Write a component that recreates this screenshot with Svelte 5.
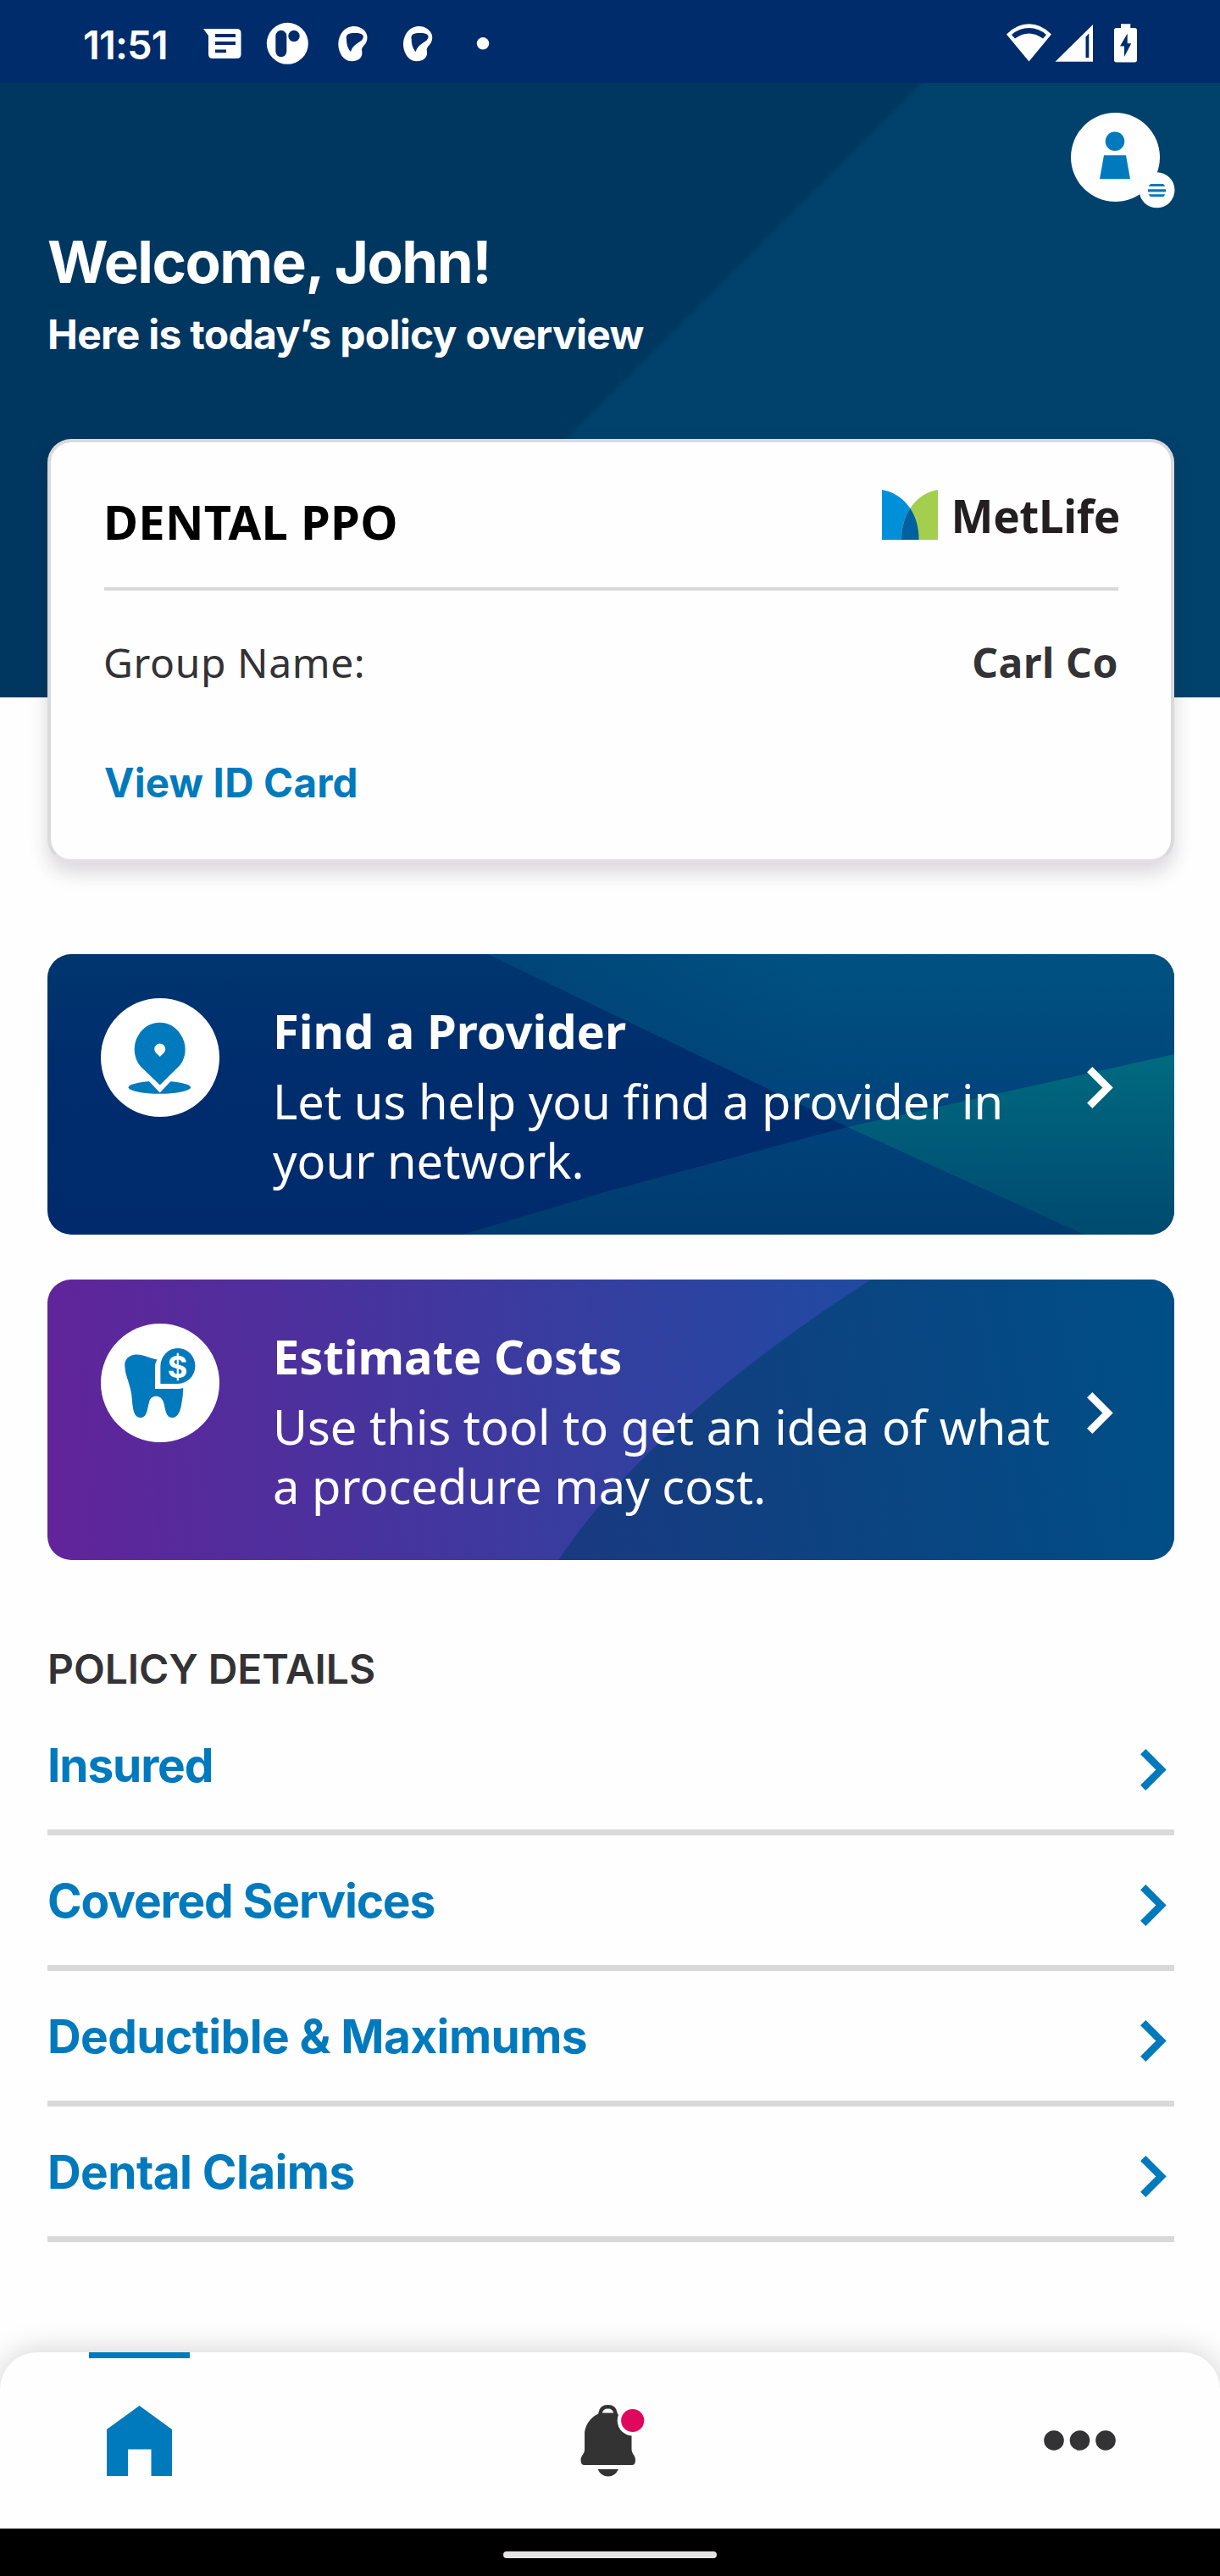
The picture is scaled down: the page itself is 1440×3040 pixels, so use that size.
<script>
  const policyLinks = [
    { label: 'Insured', fit: 'snug' },
    { label: 'Covered Services', fit: 'snug' },
    { label: 'Deductible & Maximums', fit: '' },
    { label: 'Dental Claims', fit: '' }
  ];
</script>

{#snippet chevron()}
  <svg class="chevron" viewBox="0 0 31 49" aria-hidden="true">
    <path d="M3.2 3.2 24.5 24.5 3.2 45.8" fill="none" stroke="currentColor" stroke-width="8.8" />
  </svg>
{/snippet}

<div class="screen">
  <div class="status">
    <span class="time">11:51</span>
    <svg class="notifications" viewBox="238 20 342 60" aria-hidden="true">
      <path d="M240 34h39.500q5 0 5 5v25q0 5-5 5h-28.500q-5 0-5-5V42z" fill="#fff" />
      <path d="M254 42h24M254 51h24M254 60.300h13" stroke="#002c6b" stroke-width="3.800" />
      <circle cx="339.300" cy="51.300" r="24.500" fill="#fff" />
      <rect x="325.300" y="35.800" width="13" height="31.400" rx="6.500" fill="#002c6b" />
      <circle cx="347" cy="42.500" r="6.700" fill="#002c6b" />
      {#each [0, 76.7] as dx}
        <g transform="translate({dx} 0)">
          <path d="M416 31C426 30 434 37 433.500 45C433 53 427 54 427 59C429 67 424 72.300 415 72.300C404 72 399 60 399.300 51C400 40 407 32 416 31Z" fill="#fff" />
          <path d="M409 46C407.500 40 413 39 418 39C426 38.500 431 41 428 46C425 51 417 51 414 61C410 57 409 51 409 46Z" fill="#002c6b" />
        </g>
      {/each}
      <circle cx="570" cy="51.300" r="7.200" fill="#fff" />
    </svg>
    <svg class="system" viewBox="1186 20 158 60" aria-hidden="true">
      <path d="M1214.500 72.500 1188 40.500Q1200 28.300 1214.500 28.300T1241 40.500Z" fill="#fff" />
      <path d="M1194 41Q1203 33 1214.500 33T1235 41L1231 45.500Q1223 39.500 1214.500 39.500T1198 45.500Z" fill="#002c6b" />
      <path d="M1245.500 72.700H1290V29Z" fill="#fff" />
      <path d="M1281.500 68.300V43.500L1285.300 39.500V68.300Z" fill="#002c6b" />
      <path d="M1323 28.300h11.300v4.700h5q2.700 0 2.700 2.700v35q0 2.700-2.700 2.700h-21.600q-2.700 0-2.700-2.700v-35q0-2.700 2.700-2.700h5.300z" fill="#fff" />
      <path d="M1330.700 39.500 1322 54.500H1327V67L1335.300 51.300H1330.700Z" fill="#002c6b" />
    </svg>
  </div>

  <header class="top">
    <button class="avatar" aria-label="Profile menu">
      <svg viewBox="0 0 123 113" aria-hidden="true">
        <circle cx="52.500" cy="52.500" r="52.500" fill="#fff" />
        <circle cx="52" cy="33.700" r="11.300" fill="#007abc" />
        <path d="M39 50.300H65L70 78.300H34Z" fill="#007abc" />
        <circle cx="101.500" cy="91.300" r="21" fill="#fff" />
        <path d="M94 84h15l2.500 3h-20zM91 90.300h21v3.200H91zM91.500 96.300h20l-2.500 3h-15z" fill="#007abc" />
      </svg>
    </button>
    <h1>Welcome, John!</h1>
    <p class="subtitle">Here is today’s policy overview</p>

    <section class="card">
      <div class="card-head">
        <h2>DENTAL PPO</h2>
        <div class="logo">
          <svg viewBox="0 0 66 59" aria-hidden="true">
            <clipPath id="leaf"><path d="M0 0C24 4 44 26 43.500 59H0Z" /></clipPath>
            <path d="M0 0C24 4 44 26 43.500 59H0Z" fill="#0090da" />
            <path d="M66 0C42 4 23 26 23 59H66Z" fill="#a4ce4e" />
            <path d="M66 0C42 4 23 26 23 59H66Z" fill="#0061a0" clip-path="url(#leaf)" />
          </svg>
          <span>MetLife</span>
        </div>
      </div>
      <div class="card-row">
        <span>Group Name:</span>
        <strong>Carl Co</strong>
      </div>
      <span class="card-link">View ID Card</span>
    </section>
  </header>

  <main>
    <section class="banner">
      <svg class="art" viewBox="0 0 1330 331" preserveAspectRatio="none" aria-hidden="true">
        <defs>
          <linearGradient id="base" x1="0" y1="0" x2="0" y2="1"><stop offset="0" stop-color="#00366f" /><stop offset=".4" stop-color="#002d6d" /><stop offset="1" stop-color="#002a6c" /></linearGradient>
          <linearGradient id="sky" x1="0" y1="0" x2="0" y2="1"><stop offset="0" stop-color="#005281" /><stop offset="1" stop-color="#00427a" /></linearGradient>
          <linearGradient id="fade" gradientUnits="userSpaceOnUse" x1="500" y1="0" x2="900" y2="0"><stop offset="0" stop-color="#003a70" stop-opacity=".6" /><stop offset="1" stop-color="#003a70" stop-opacity="0" /></linearGradient>
          <linearGradient id="floor" x1="0" y1="0" x2="0" y2="1"><stop offset="0" stop-color="#00427a" /><stop offset="1" stop-color="#003b6e" /></linearGradient>
          <linearGradient id="teal" x1="0" y1="0" x2="0" y2="1"><stop offset="0" stop-color="#006a80" /><stop offset="1" stop-color="#004a70" /></linearGradient>
        </defs>
        <path d="M0 0H1330V331H0Z" fill="url(#base)" />
        <path d="M520 0H1330V118L944 204Z" fill="url(#sky)" />
        <path d="M520 0H1330V118L944 204Z" fill="url(#fade)" />
        <path d="M490 331 664 279 944 204 1230 331Z" fill="url(#floor)" />
        <path d="M944 204 1330 118V331H1224Z" fill="url(#teal)" />
      </svg>
      <svg class="badge" viewBox="0 0 140 140" aria-hidden="true">
        <circle cx="70" cy="70" r="70" fill="#fff" />
        <ellipse cx="69.300" cy="105.200" rx="36.700" ry="7.500" fill="#007abc" />
        <path d="M55 96 69.700 111.500 84.500 96Z" fill="#fff" />
        <path d="M69.700 102.500 47.500 81C38 71 37.500 54 44.500 43.500C50 34 59 28.800 69.700 28.800S89 34 94.500 43.500C102 54 101.500 71 91.500 81Z" fill="#007abc" />
        <path d="M69.700 69 65 64.500A6.500 6.500 0 1 1 74.500 64.500Z" fill="#fff" />
      </svg>
      <div class="copy">
        <h3>Find a Provider</h3>
        <p>Let us help you find a provider in your network.</p>
      </div>
      {@render chevron()}
    </section>

    <section class="banner">
      <svg class="art" viewBox="0 0 1330 331" preserveAspectRatio="none" aria-hidden="true">
        <defs>
          <linearGradient id="violet" gradientUnits="userSpaceOnUse" x1="0" y1="60" x2="976" y2="0"><stop offset="0" stop-color="#61249b" /><stop offset=".6" stop-color="#393c9f" /><stop offset="1" stop-color="#1f4ba2" /></linearGradient>
          <linearGradient id="deep" gradientUnits="userSpaceOnUse" x1="600" y1="331" x2="1330" y2="200"><stop offset="0" stop-color="#1a3980" /><stop offset=".5" stop-color="#0b4481" /><stop offset="1" stop-color="#004e86" /></linearGradient>
        </defs>
        <path d="M0 0H1330V331H0Z" fill="url(#violet)" />
        <path d="M972 0Q715 165 603 331H1330V0Z" fill="url(#deep)" />
      </svg>
      <svg class="badge" viewBox="0 0 140 140" aria-hidden="true">
        <circle cx="70" cy="70" r="70" fill="#fff" />
        <path d="M28.300 50C27.500 42 34 36.500 42 36.500C51 36.500 58 41 66.500 42.500Q64 46 64 52V77H92.700L97.300 76Q97 86 95.300 94.500C94 103 91 111 84.500 111C76 111 76.500 100 74 93C72 83.500 58.500 83 57 93C54.500 101 55 111 46.500 111C39 111 38 101 37 92C36.500 81 34 73 31 64Q28.500 57 28.300 50Z" fill="#007abc" />
        <path d="M70.400 71V50A20.500 21 0 1 1 91 71Z" fill="#007abc" />
        <text x="90.500" y="63.600" class="dollar">$</text>
      </svg>
      <div class="copy">
        <h3>Estimate Costs</h3>
        <p>Use this tool to get an idea of what a procedure may cost.</p>
      </div>
      {@render chevron()}
    </section>

    <h4>POLICY DETAILS</h4>
    <ul>
      {#each policyLinks as link}
        <li>
          <span class={link.fit}>{link.label}</span>
          {@render chevron()}
        </li>
      {/each}
    </ul>
  </main>

  <nav>
    <span class="tab active">
      <svg class="home" viewBox="0 0 77 83" aria-hidden="true"><path d="M38.500 0 77 28V83H52.500V51.500H25V83H0V28Z" fill="#007abc" /></svg>
    </span>
    <svg class="bell" viewBox="685 2836 77 88" aria-hidden="true">
      <path d="M708.500 2851V2848Q709.500 2840.200 717.500 2840.200T726.500 2848V2851" fill="none" stroke="#333" stroke-width="4.500" />
      <path d="M710 2847.500H725C736 2851 745 2861 745.500 2873V2891C746 2896 750 2898 750 2903Q750 2909 746 2909H689.500Q685.500 2909 685.500 2903C685.500 2898 690 2896 690 2891V2873C690 2861 699 2850 710 2847.500Z" fill="#333" />
      <path d="M705.500 2914H730Q726 2922.500 717.800 2922.500T705.500 2914Z" fill="#333" />
      <circle cx="746.700" cy="2856.500" r="18" fill="#fff" />
      <circle cx="746.700" cy="2856.500" r="13.600" fill="#e0085c" />
    </svg>
    <svg class="more" viewBox="0 0 86 24" aria-hidden="true">
      <circle cx="12" cy="12" r="11.800" fill="#333235" /><circle cx="42.500" cy="12" r="11.800" fill="#333235" /><circle cx="73" cy="12" r="11.800" fill="#333235" />
    </svg>
  </nav>
  <div class="gesture"><span></span></div>
</div>

<style>
  :global(body) { margin: 0; background: #fefefe; }
  .screen {
    display: flex; flex-direction: column; box-sizing: border-box;
    width: 1440px; height: 3040px; overflow: hidden;
    background: #fefefe; color: #333235; font-family: "Noto Sans", sans-serif;
  }
  svg { display: block; flex: none; }
  h1, h2, h3, h4, p, ul { margin: 0; padding: 0; }

  .status { flex: none; display: flex; align-items: flex-start; height: 98px; padding-left: 98px; box-sizing: border-box; background: #002c6b; color: #fff; }
  .time { width: 140px; padding-top: 23px; font: 600 47px/60px Inter, sans-serif; letter-spacing: -.900px; }
  .notifications { width: 342px; height: 60px; margin-top: 20px; }
  .system { width: 158px; height: 60px; margin: 20px 96px 0 auto; }

  .top {
    flex: none; display: flex; flex-direction: column; height: 920px; padding: 0 54px 0 56px; box-sizing: border-box;
    background: linear-gradient(135deg, #003761 50%, #00426c 50.500%) no-repeat 0 0 / 100% 725px;
    color: #fff; font-family: Inter, sans-serif;
  }
  .avatar { align-self: flex-end; width: 123px; height: 113px; margin: 35px -1px 0 0; padding: 0; border: 0; background: none; }
  h1 { margin-top: 23px; font-size: 69px; line-height: 80px; font-weight: 700; letter-spacing: -1.500px; }
  .subtitle { margin-top: 16px; font-size: 48px; line-height: 60px; font-weight: 700; letter-spacing: -.720px; }

  .card {
    height: 502px; margin-top: 93px; padding: 55px 62px 0 63px; box-sizing: border-box;
    border: 4px solid #dadadc; border-bottom-color: #e2e0e2; border-radius: 28px; background: #fefefe;
    box-shadow: 0 12px 22px rgba(50, 40, 55, .18); color: #333235;
  }
  .card-head { display: flex; justify-content: space-between; height: 116px; border-bottom: 4px solid #d9d9d9; }
  h2 { color: #000; font: 700 56px/76px "Noto Sans", sans-serif; letter-spacing: .300px; margin-left: -1px; }
  .logo { display: flex; gap: 16px; color: #231f20; font: 700 53px/72px "Noto Sans", sans-serif; }
  .logo svg { width: 66px; height: 59px; margin-top: 1px; }
  .logo span { margin: -4px -2px 0 0; letter-spacing: -.400px; }
  .card-row { display: flex; justify-content: space-between; margin-top: 52px; font: 400 48px/66px "Noto Sans", sans-serif; letter-spacing: .600px; }
  .card-row span { margin-left: -1px; }
  .card-link { display: block; margin-top: 79px; color: #007abc; font-size: 47.500px; line-height: 60px; font-weight: 700; letter-spacing: .200px; }

  main { flex: none; margin-bottom: 53px; padding: 108px 54px 0 56px; }
  .banner { position: relative; display: flex; align-items: flex-start; height: 331px; margin-bottom: 53px; padding: 52px 72px 0 63px; box-sizing: border-box; border-radius: 28px; overflow: hidden; color: #fff; }
  .art { position: absolute; inset: 0; width: 100%; height: 100%; }
  .badge { position: relative; width: 140px; height: 140px; }
  .dollar { fill: #fff; font: 700 36px Inter, sans-serif; text-anchor: middle; }
  .copy { position: relative; width: 940px; margin-left: 63px; }
  h3 { font-size: 56px; line-height: 76px; font-weight: 700; letter-spacing: 0; }
  .copy p { margin-top: 10px; font-size: 56px; line-height: 70px; letter-spacing: .030px; }
  .chevron { position: relative; width: 31px; height: 49px; }
  .banner .chevron { margin: 81px 0 0 auto; }

  h4 { margin-top: 99px; font: 600 48px/60px Inter, sans-serif; letter-spacing: -.050px; }
  ul { margin-top: 6px; list-style: none; }
  li { display: flex; justify-content: space-between; align-items: flex-start; height: 160px; padding: 42px 9px 0 0; box-sizing: border-box; border-bottom: 7px solid #d9d9d9; color: #007abc; font: 700 55px/70px Inter, sans-serif; letter-spacing: -.600px; }
  li .snug { letter-spacing: -1.150px; }
  li .chevron { margin-top: 16px; }

  nav { flex: none; display: flex; align-items: flex-start; height: 208px; margin-top: 77px; padding-left: 105px; border-radius: 44px 44px 0 0; background: #fefefe; box-shadow: 0 0 36px rgba(0, 0, 0, .19); }
  .tab { display: flex; justify-content: center; width: 119px; box-sizing: border-box; }
  .active { border-top: 7px solid #007abc; }
  .home { width: 77px; height: 83px; margin-top: 56px; }
  .bell { width: 77px; height: 88px; margin: 60px 0 0 461px; }
  .more { width: 86px; height: 24px; margin: 92px 0 0 470px; }
  .gesture { flex: none; display: flex; justify-content: center; height: 56px; padding-top: 27px; box-sizing: border-box; background: #000; }
  .gesture span { width: 252px; height: 8px; border-radius: 4px; background: #e6e4e5; }
</style>
